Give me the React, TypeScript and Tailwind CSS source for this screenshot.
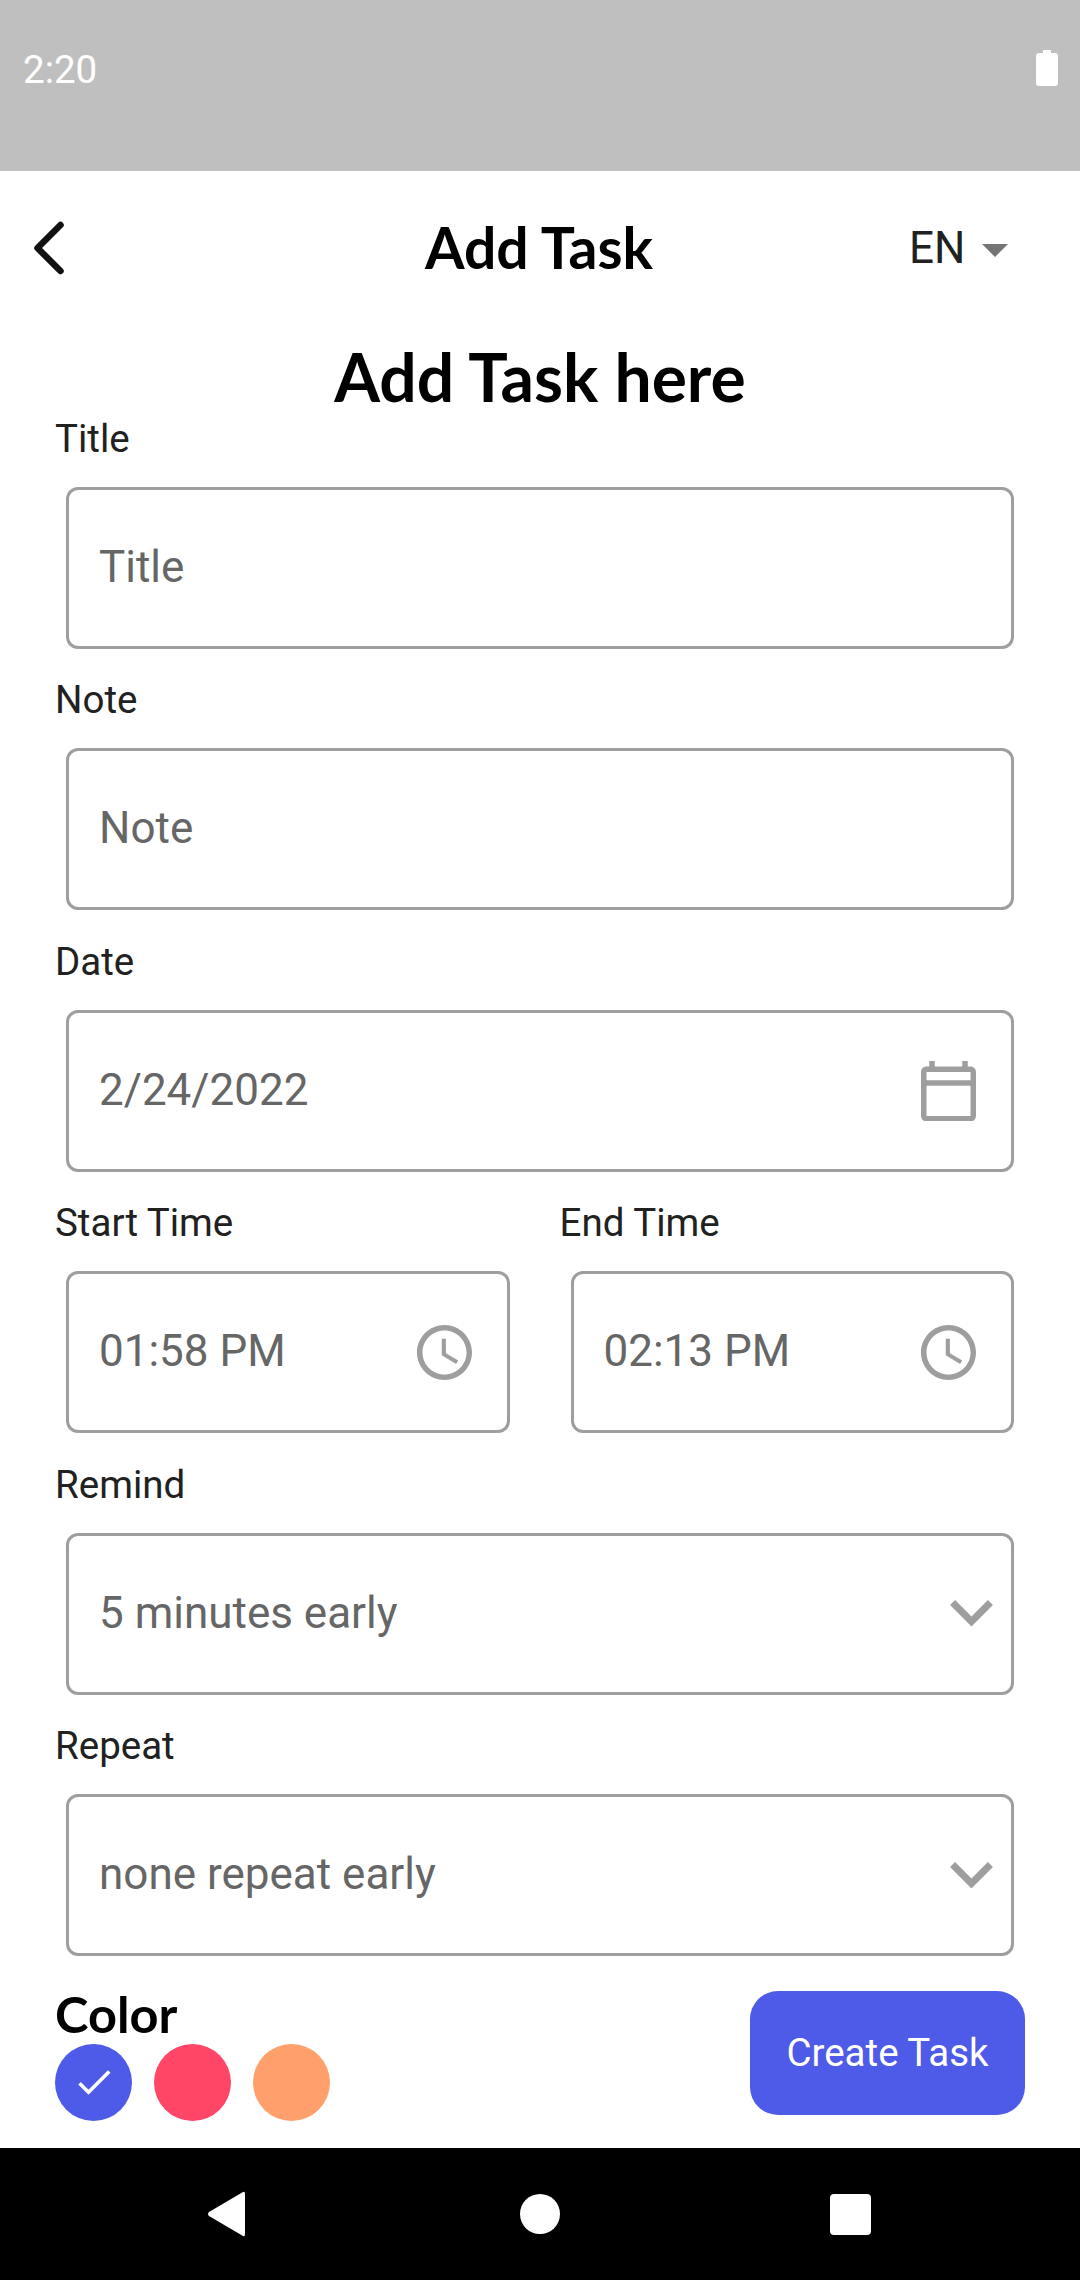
import { ChevronLeft } from "lucide-react";
import type { ReactNode } from "react";

const roboto = "font-['Roboto',sans-serif]";
const lato = "font-['Lato',sans-serif]";

function CalendarIcon() {
  return (
    <svg width="55" height="60.5" viewBox="2 1 20 22" fill="#9e9e9e">
      <path d="M20 3h-1V1h-2v2H7V1H5v2H4c-1.1 0-2 .9-2 2v16c0 1.1.9 2 2 2h16c1.1 0 2-.9 2-2V5c0-1.1-.9-2-2-2zm0 2v3H4V5h16zM4 21V10h16v11H4z" />
    </svg>
  );
}

function ClockIcon() {
  return (
    <svg width="55" height="55" viewBox="2 2 20 20" fill="#9e9e9e">
      <path d="M11.99 2C6.47 2 2 6.48 2 12s4.47 10 9.99 10C17.52 22 22 17.52 22 12S17.52 2 11.99 2zM12 20c-4.42 0-8-3.58-8-8s3.58-8 8-8 8 3.58 8 8-3.58 8-8 8z" />
      <path d="M12.5 7H11v6l5.25 3.15.75-1.23-4.5-2.67z" />
    </svg>
  );
}

function ChevronIcon() {
  return (
    <svg width="43" height="26.5" viewBox="6 8.59 12 7.41" fill="#9e9e9e" className="mr-[-17px]">
      <path d="M7.41 8.59L12 13.17l4.59-4.58L18 10l-6 6-6-6z" />
    </svg>
  );
}

function Field({ label, value, icon, grow }: { label: string; value: string; icon?: ReactNode; grow?: boolean }) {
  return (
    <div className={grow ? "flex-1" : ""}>
      <div className={`${roboto} text-[38.5px] leading-[46px] text-[#212121]`}>{label}</div>
      <div className="ml-[11px] mt-[25px] flex h-[162px] items-center justify-between rounded-[12px] border-[3px] border-[#9e9e9e] pl-[30px] pr-[35px]">
        <span className={`${roboto} mt-[-2px] text-[44px] text-[#666666]`}>{value}</span>
        {icon}
      </div>
    </div>
  );
}

export default function App() {
  return (
    <div className="flex h-[2280px] w-[1080px] flex-col overflow-hidden bg-white">
      <div className="flex h-[171px] shrink-0 items-start justify-between bg-[#bfbfbf] pl-[23px] pr-[22px] pt-[47px]">
        <span className={`${roboto} text-[38.5px] leading-[46px] text-white`}>2:20</span>
        <svg width="22" height="36" viewBox="0 0 22 36" fill="#ffffff" className="mt-[3px]">
          <path d="M7 0H15V3H19Q22 3 22 6V33Q22 36 19 36H3Q0 36 0 33V6Q0 3 3 3H7Z" />
        </svg>
      </div>

      <div className="relative flex h-[154px] shrink-0 items-center justify-center pr-[2px]">
        <ChevronLeft className="absolute left-[3px] top-[31px]" size={92} strokeWidth={1.7} color="#111111" />
        <span className={`${lato} text-[57px] font-bold text-black`}>Add Task</span>
        <div className="absolute left-[909px] top-[51px] flex items-center gap-[17px]">
          <span className={`${roboto} text-[44px] leading-[52px] text-[#212121]`}>EN</span>
          <span className="mt-[4px] h-0 w-0 border-x-[13px] border-t-[13px] border-x-transparent border-t-[#757575]" />
        </div>
      </div>

      <div className={`${lato} text-center text-[66px] font-bold leading-[80px] text-black mt-[12px]`}>Add Task here</div>

      <div className="mt-[-1px] flex flex-col gap-[28.4px] pl-[55px] pr-[66px]">
        <Field label="Title" value="Title" />
        <Field label="Note" value="Note" />
        <Field label="Date" value="2/24/2022" icon={<CalendarIcon />} />
        <div className="flex gap-[50px]">
          <Field label="Start Time" value="01:58 PM" icon={<ClockIcon />} grow />
          <Field label="End Time" value="02:13 PM" icon={<ClockIcon />} grow />
        </div>
        <Field label="Remind" value="5 minutes early" icon={<ChevronIcon />} />
        <Field label="Repeat" value="none repeat early" icon={<ChevronIcon />} />
      </div>

      <div className="flex flex-1 items-start justify-between pl-[55px] pr-[55px] pt-[35px]">
        <div>
          <div className={`${lato} mt-[-6px] text-[50.5px] font-bold leading-[58px] text-black`}>Color</div>
          <div className="mt-[1px] flex gap-[22px]">
            <div className="flex h-[77px] w-[77px] items-center justify-center rounded-full bg-[#4e5ae8]">
              <svg width="44" height="44" viewBox="0 0 24 24" fill="#ffffff">
                <path d="M9 16.2L4.8 12l-1.4 1.4L9 19 21 7l-1.4-1.4L9 16.2z" />
              </svg>
            </div>
            <div className="h-[77px] w-[77px] rounded-full bg-[#ff4667]" />
            <div className="h-[77px] w-[77px] rounded-full bg-[#ff9f6b]" />
          </div>
        </div>
        <div className={`${roboto} flex h-[124px] w-[275px] items-center justify-center rounded-[28px] bg-[#4e5ae8] text-[38.5px] text-white`}>
          Create Task
        </div>
      </div>

      <div className="flex h-[132px] shrink-0 items-center bg-black pl-[207px]">
        <svg width="38" height="46" viewBox="0 0 38 46" fill="#ffffff">
          <path d="M36 1Q38 0 38 3V43Q38 46 36 45L2 25Q0 23 2 21Z" />
        </svg>
        <div className="ml-[275px] h-[40px] w-[40px] rounded-full bg-white" />
        <div className="ml-[270px] h-[41px] w-[41px] rounded-[4px] bg-white" />
      </div>
    </div>
  );
}
